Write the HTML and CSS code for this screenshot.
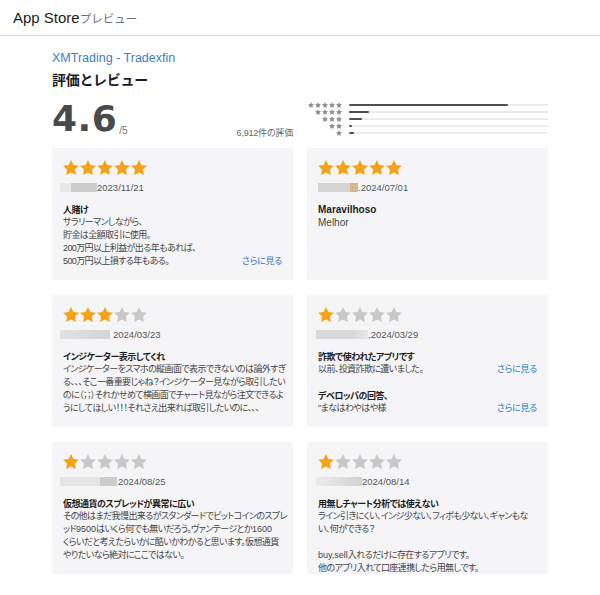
FILE: index.html
```html
<!DOCTYPE html>
<html lang="ja">
<head>
<meta charset="utf-8">
<title>App Store プレビュー</title>
<link rel="stylesheet" href="styles.css">
</head>
<body>
<svg class="defs" aria-hidden="true">
  <symbol id="star" viewBox="2 2 20 19"><path d="M12 2l3.09 6.26L22 9.27l-5 4.87 1.18 6.88L12 17.77l-6.18 3.25L7 14.14 2 9.27l6.91-1.01L12 2z"/></symbol>
</svg>
<header class="topbar">
  <h1 class="brand">App Store<span class="brand-sub">プレビュー</span></h1>
</header>
<main class="page">
  <a class="app-name">XMTrading - Tradexfin</a>
  <h2 class="section-title">評価とレビュー</h2>
  <div class="summary">
    <div class="score">
      <span class="score-num">4.6</span><span class="score-max">/5</span>
      <span class="count">6,912件の評価</span>
    </div>
    <div class="histogram">
      <div class="hrow"><span class="hstars"><svg class="hs"><use href="#star"/></svg><svg class="hs"><use href="#star"/></svg><svg class="hs"><use href="#star"/></svg><svg class="hs"><use href="#star"/></svg><svg class="hs"><use href="#star"/></svg></span><span class="hbar"><span class="hfill" style="width:80%"></span></span></div>
      <div class="hrow"><span class="hstars"><svg class="hs"><use href="#star"/></svg><svg class="hs"><use href="#star"/></svg><svg class="hs"><use href="#star"/></svg><svg class="hs"><use href="#star"/></svg></span><span class="hbar"><span class="hfill" style="width:10%"></span></span></div>
      <div class="hrow"><span class="hstars"><svg class="hs"><use href="#star"/></svg><svg class="hs"><use href="#star"/></svg><svg class="hs"><use href="#star"/></svg></span><span class="hbar"><span class="hfill" style="width:6.5%"></span></span></div>
      <div class="hrow"><span class="hstars"><svg class="hs"><use href="#star"/></svg><svg class="hs"><use href="#star"/></svg></span><span class="hbar"><span class="hfill" style="width:1.5%"></span></span></div>
      <div class="hrow"><span class="hstars"><svg class="hs"><use href="#star"/></svg></span><span class="hbar"><span class="hfill" style="width:2.5%"></span></span></div>
    </div>
  </div>

  <div class="reviews">
    <article class="card">
      <div class="stars"><svg class="star on"><use href="#star"/></svg><svg class="star on"><use href="#star"/></svg><svg class="star on"><use href="#star"/></svg><svg class="star on"><use href="#star"/></svg><svg class="star on"><use href="#star"/></svg></div>
      <div class="byline"><span class="mask m1"></span><span>2023/11/21</span></div>
      <h3 class="title">人賭け</h3>
      <div class="body-row">
        <p class="body">サラリーマンしながら、<br>貯金は全額取引に使用。<br>200万円以上利益が出る年もあれば、<br>500万円以上損する年もある。</p>
        <a class="more">さらに見る</a>
      </div>
    </article>

    <article class="card">
      <div class="stars"><svg class="star on"><use href="#star"/></svg><svg class="star on"><use href="#star"/></svg><svg class="star on"><use href="#star"/></svg><svg class="star on"><use href="#star"/></svg><svg class="star on"><use href="#star"/></svg></div>
      <div class="byline"><span class="mask m2"></span><span>.2024/07/01</span></div>
      <h3 class="title latin">Maravilhoso</h3>
      <p class="body latin">Melhor</p>
    </article>

    <article class="card">
      <div class="stars"><svg class="star on"><use href="#star"/></svg><svg class="star on"><use href="#star"/></svg><svg class="star on"><use href="#star"/></svg><svg class="star"><use href="#star"/></svg><svg class="star"><use href="#star"/></svg></div>
      <div class="byline"><span class="mask m3"></span><span>2024/03/23</span></div>
      <h3 class="title">インジケーター表示してくれ</h3>
      <p class="body">インジケーターをスマホの縦画面で表示できないのは論外すぎ<br>る、、、そこ一番重要じゃね？インジケーター見ながら取引したい<br>のに（；；）それかせめて横画面でチャート見ながら注文できるよ<br>うにしてほしい！！！それさえ出来れば取引したいのに、、、</p>
    </article>

    <article class="card">
      <div class="stars"><svg class="star on"><use href="#star"/></svg><svg class="star"><use href="#star"/></svg><svg class="star"><use href="#star"/></svg><svg class="star"><use href="#star"/></svg><svg class="star"><use href="#star"/></svg></div>
      <div class="byline"><span class="mask m4"></span><span>,2024/03/29</span></div>
      <h3 class="title">詐欺で使われたアプリです</h3>
      <div class="body-row">
        <p class="body">以前、投資詐欺に遭いました。</p>
        <a class="more">さらに見る</a>
      </div>
      <h3 class="title reply">デベロッパの回答、</h3>
      <div class="body-row">
        <p class="body">"まなはわやはや様</p>
        <a class="more">さらに見る</a>
      </div>
    </article>

    <article class="card">
      <div class="stars"><svg class="star on"><use href="#star"/></svg><svg class="star"><use href="#star"/></svg><svg class="star"><use href="#star"/></svg><svg class="star"><use href="#star"/></svg><svg class="star"><use href="#star"/></svg></div>
      <div class="byline"><span class="mask m5"></span><span>2024/08/25</span></div>
      <h3 class="title">仮想通貨のスプレッドが異常に広い</h3>
      <p class="body">その他はまだ我慢出来るがスタンダードでビットコインのスプレ<br>ッド<span class="num">9500</span>はいくら何でも無いだろう。ヴァンテージとか<span class="num">1600</span><br>くらいだと考えたらいかに酷いかわかると思います。仮想通貨<br>やりたいなら絶対にここではない。</p>
    </article>

    <article class="card">
      <div class="stars"><svg class="star on"><use href="#star"/></svg><svg class="star"><use href="#star"/></svg><svg class="star"><use href="#star"/></svg><svg class="star"><use href="#star"/></svg><svg class="star"><use href="#star"/></svg></div>
      <div class="byline"><span class="mask m6"></span><span>2024/08/14</span></div>
      <h3 class="title">用無しチャート分析では使えない</h3>
      <p class="body">ライン引きにくい、インジ少ない、フィボも少ない、ギャンもな<br>い、何ができる？<br><br><span class="num">buy,sell</span>入れるだけに存在するアプリです。<br>他のアプリ入れて口座連携したら用無しです。</p>
    </article>
  </div>
</main>
</body>
</html>
```
FILE: styles.css
```css
* { box-sizing: border-box; }

body {
  margin: 0;
  background: #ffffff;
  color: #333;
  font-family: "Liberation Sans", "Noto Sans CJK JP", sans-serif;
}

.defs {
  width: 0;
  height: 0;
  overflow: hidden;
  display: block;
}

.topbar {
  height: 36px;
  border-bottom: 1px solid #dcdcdc;
  display: flex;
  align-items: center;
  padding-left: 13px;
}

.brand {
  margin: 0;
  font-size: 15px;
  font-weight: normal;
  line-height: 1;
  color: #1d1d1f;
}

.brand-sub {
  font-size: 11.5px;
  color: #6e6e73;
}

.page {
  padding: 0 52px;
}

.app-name {
  display: block;
  margin-top: 14px;
  font-size: 12.5px;
  line-height: 16px;
  color: #3a7fc1;
}

.section-title {
  margin: 4px 0 0;
  font-size: 14px;
  line-height: 20px;
  font-weight: bold;
  color: #1d1d1f;
  letter-spacing: -0.3px;
}

.summary {
  margin-top: 8px;
  display: grid;
  grid-template-columns: repeat(2, minmax(0, 1fr));
  column-gap: 14px;
  height: 36px;
}

.score {
  display: flex;
  align-items: flex-end;
}

.score-num {
  font-family: "DejaVu Sans", sans-serif;
  font-weight: bold;
  font-size: 36px;
  line-height: 36px;
  color: #4a4a4a;
  letter-spacing: 0.5px;
}

.score-max {
  font-size: 10px;
  line-height: 12px;
  color: #777;
  margin-left: 2px;
}

.count {
  margin-left: auto;
  margin-bottom: -2px;
  font-size: 9px;
  line-height: 12px;
  color: #666;
  letter-spacing: -0.2px;
  font-feature-settings: "palt";
}

.histogram {
  padding-top: 3.5px;
  display: flex;
  flex-direction: column;
}

.hrow {
  display: flex;
  align-items: center;
  height: 7px;
  gap: 7px;
}

.hstars {
  width: 35px;
  display: flex;
  justify-content: flex-end;
  gap: 1px;
}

.hs {
  width: 6px;
  height: 6px;
  fill: #8e8e93;
}

.hbar {
  flex: 1;
  height: 2px;
  background: #ececec;
  border-radius: 1px;
}

.hfill {
  display: block;
  height: 100%;
  background: #4f4f4f;
  border-radius: 1px;
}

.reviews {
  margin-top: 14px;
  display: grid;
  grid-template-columns: repeat(2, minmax(0, 1fr));
  column-gap: 14px;
  row-gap: 15px;
}

.card {
  background: #f5f5f7;
  height: 132px;
  padding: 12px 11px;
  min-width: 0;
}

.stars {
  display: flex;
  gap: 1px;
  height: 15px;
}

.star {
  width: 16px;
  height: 15px;
  fill: #c8c8c8;
}

.star.on {
  fill: #f5a21b;
}

.byline {
  margin-top: 6px;
  height: 12px;
  display: flex;
  align-items: center;
  font-size: 9.5px;
  color: #555;
}

.mask {
  display: inline-block;
  height: 9px;
  margin-left: -3px;
}

.m1 { width: 37px; background: linear-gradient(90deg, #e8e8e8 0 30%, #cdcdcd 30% 100%); }
.m2 { width: 40px; margin-left: 0; background: linear-gradient(90deg, #d4d4d4 0 80%, #d8b88a 80% 100%); }
.m3 { width: 50px; margin-right: 3px; background: linear-gradient(90deg, #e2e2e2, #d4d4d4); }
.m4 { width: 52px; margin-left: -2px; background: linear-gradient(90deg, #d9d9d9 0 70%, #e6e6e6 100%); }
.m5 { width: 57px; margin-right: 1px; background: linear-gradient(90deg, #e4e4e4 0 70%, #cdcdcd 70% 100%); }
.m6 { width: 46px; margin-left: -2px; background: linear-gradient(90deg, #ececec, #d2d2d2); }

.title {
  margin: 11px 0 0;
  font-size: 9px;
  line-height: 12px;
  font-weight: bold;
  color: #1d1d1f;
  letter-spacing: -0.5px;
  font-feature-settings: "palt";
  white-space: nowrap;
}

.title.reply {
  margin-top: 13.5px;
}

.body {
  margin: 0;
  font-size: 9px;
  line-height: 13px;
  color: #444;
  letter-spacing: -0.6px;
  font-feature-settings: "palt";
  white-space: nowrap;
}

.num {
  letter-spacing: 0;
}

.title.latin,
.body.latin {
  font-size: 10px;
  letter-spacing: 0;
}

.body-row {
  display: flex;
  justify-content: space-between;
  align-items: flex-end;
}

.more {
  font-size: 9px;
  line-height: 13px;
  color: #2f7ac4;
  letter-spacing: -0.3px;
  font-feature-settings: "palt";
}
```
